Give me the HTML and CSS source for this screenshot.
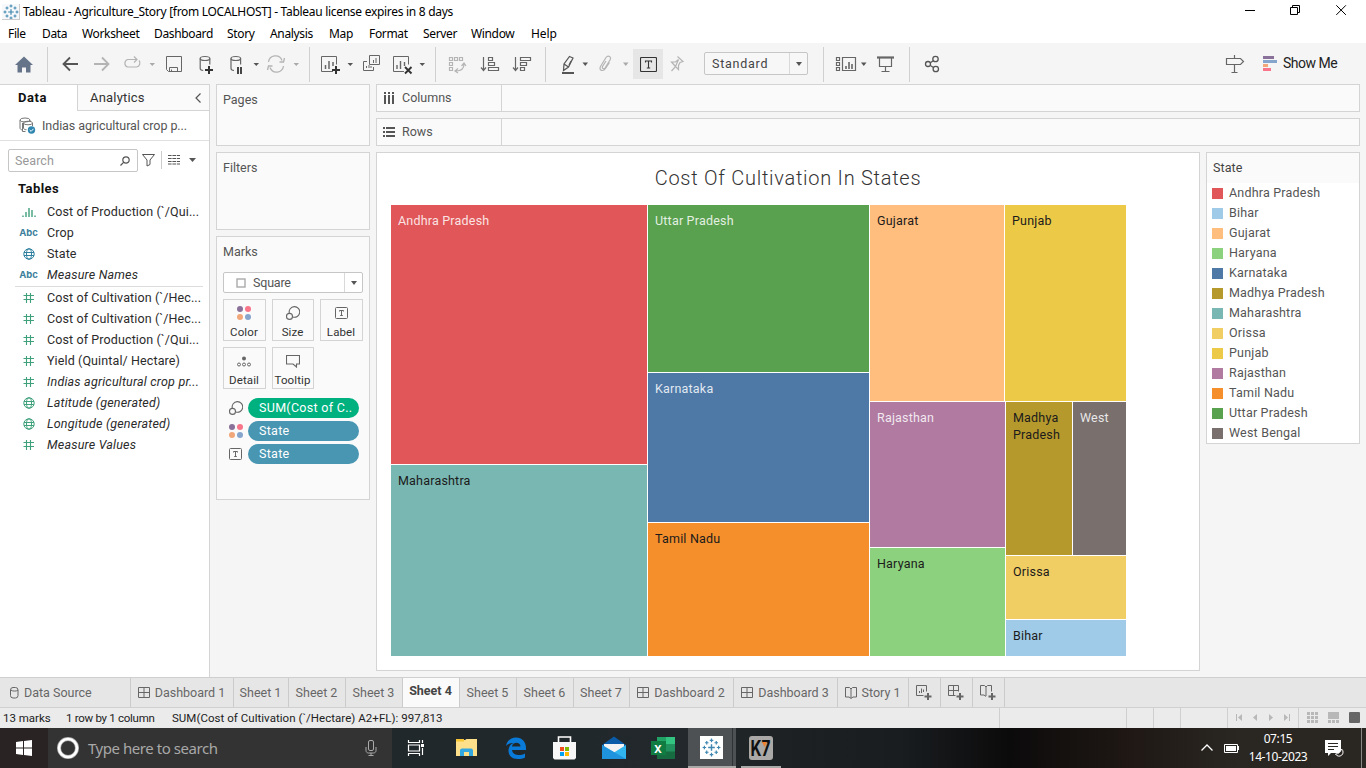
FILE: index.html
```html
<!DOCTYPE html>
<html lang="en">
<head>
<meta charset="utf-8">
<title>Tableau - Agriculture_Story</title>
<link rel="stylesheet" href="styles.css">
</head>
<body>
<svg width="0" height="0" class="defs">
  <defs>
    <symbol id="hash" viewBox="0 0 12 12"><path d="M3.500 1v10M7.500 1v10M.5 3.500h10.500M.5 7.500h10.500" fill="none" stroke="#3fa17c" stroke-width="1.1"/></symbol>
    <symbol id="globe" viewBox="0 0 12 12"><g fill="none" stroke="currentColor"><circle cx="6" cy="6" r="5.200"/><ellipse cx="6" cy="6" rx="2.500" ry="5.200"/><path d="M1 4.500h10M1 7.500h10"/></g></symbol>
    <symbol id="dots" viewBox="0 0 14 14"><circle cx="3" cy="3" r="3" fill="#8a7199"/><circle cx="11" cy="3" r="3" fill="#f8758a"/><circle cx="3" cy="11" r="3" fill="#f2a77b"/><circle cx="11" cy="11" r="3" fill="#85a5cd"/></symbol>
    <symbol id="size" viewBox="0 0 14 14"><g fill="none" stroke="#666" stroke-width="1.1"><path d="M3.300 7.200A5.300 5.300 0 1 1 6.800 11"/><circle cx="3.500" cy="10.400" r="3"/></g></symbol>
    <symbol id="label" viewBox="0 0 13 12"><rect x=".5" y=".5" width="12" height="11" rx="1" fill="none" stroke="#666"/><path d="M4.500 4.500V3.500h4v1M6.500 3.500v5M5.200 8.500h2.600" fill="none" stroke="#666"/></symbol>
    <symbol id="dash" viewBox="0 0 12 12"><path d="M.5.5h11v10H.5zM6 .5v10M.5 5.500h11" fill="none" stroke="#666"/></symbol>
    <symbol id="flake" viewBox="0 0 16 16"><g fill="none" stroke="#3e87b0"><path stroke-width="1.2" d="M8 5.2v5.600M5.200 8h5.600"/><path d="M8 .5v3M6.500 2h3M8 12.500v3M6.500 14h3M.5 8h3M2 6.500v3M12.500 8h3M14 6.500v3M4 2.500v3M2.500 4h3M12 2.500v3M10.500 4h3M4 10.500v3M2.500 12h3M12 10.500v3M10.500 12h3"/></g></symbol>
  </defs>
</svg>

<header class="titlebar">
  <svg class="app-ico" width="18" height="16" viewBox="0 0 18 16"><rect width="18" height="16" fill="#f6f8fa"/><use href="#flake" x="1" y="0" width="16" height="16"/><path d="M17.500 0v16M0 15.500h18" stroke="#ccc"/></svg>
  <span class="title-text">Tableau - Agriculture_Story [from LOCALHOST] - Tableau license expires in 8 days</span>
  <svg class="win-ctl" width="126" height="22" viewBox="1240 0 126 22" fill="none" stroke="#000"><path d="M1245 10.500h10M1290.500 7.500h7v7h-7zM1292.500 7.500v-2h7v7h-2M1336.300 5.300l9.600 9.600M1345.900 5.300l-9.600 9.600"/></svg>
</header>
<nav class="menubar">
  <span class="m1">File</span><span class="m2">Data</span><span class="m3">Worksheet</span><span class="m4">Dashboard</span><span class="m5">Story</span><span class="m6">Analysis</span><span class="m7">Map</span><span class="m8">Format</span><span class="m9">Server</span><span class="m10">Window</span><span class="m11">Help</span>
</nav>

<div class="toolbar">
  <svg width="48" height="40" viewBox="0 44 48 40"><path d="M24 56.500l9 8.500h-2.500v7.500h-4.500v-5h-4v5h-4.500V65H15z" fill="#66748a"/><path d="M47.500 47v35" stroke="#d0d0d0"/></svg>
  <svg width="70" height="40" viewBox="48 44 70 40" fill="none" stroke-width="1.8"><path d="M78 64H63.500M70 57.500L63.500 64l6.500 6.500" stroke="#555"/><path d="M94 64h14.500M102 57.500l6.500 6.500-6.500 6.500" stroke="#b4b4b4"/></svg>
  <svg width="42" height="40" viewBox="118 44 42 40" fill="none" stroke="#b4b4b4" stroke-width="1.200"><path d="M129 59.500h-1.500a4 4 0 0 0 0 7.500h9a4 4 0 0 0 2.500-6.500M129 59.500h7.500M134 56.500l3 3-3 3"/><path d="M149.500 63h5.500l-2.700 3z" fill="#aaa" stroke="none"/></svg>
  <svg width="28" height="40" viewBox="160 44 28 40" fill="none" stroke="#666"><path d="M166.500 56.500h15v15h-13l-2-2zM169.500 71v-3.500h8V71M171.500 71v-1.500"/></svg>
  <svg width="34" height="40" viewBox="188 44 34 40" fill="none" stroke="#666" stroke-width="1.200"><ellipse cx="205" cy="58.500" rx="4.800" ry="2"/><path d="M200.200 58.500v10c0 1.200 1.500 1.800 3 2M209.800 58.500v6"/><path d="M209 66v8M205 70h8" stroke="#333" stroke-width="2"/></svg>
  <svg width="42" height="40" viewBox="222 44 42 40" fill="none" stroke="#666" stroke-width="1.200"><ellipse cx="235.800" cy="58.500" rx="4.800" ry="2"/><path d="M231 58.500v10c0 1.200 1.500 1.800 3 2M240.600 58.500v6"/><path d="M238 67v7M241 67v7" stroke="#333" stroke-width="1.800"/><path d="M253.500 63h5.500l-2.700 3z" fill="#555" stroke="none"/></svg>
  <svg width="46" height="40" viewBox="264 44 46 40" fill="none" stroke="#b4b4b4" stroke-width="1.300"><path d="M268.500 62a7 7 0 0 1 13.500-1.500M283.500 66a7 7 0 0 1-13.500 1.500M279.500 62h4l1-4M272.500 66h-4l-1 4"/><path d="M293.500 63h5.500l-2.700 3z" fill="#aaa" stroke="none"/><path d="M309.500 47v35" stroke="#d0d0d0" stroke-width="1"/></svg>
  <svg width="48" height="40" viewBox="310 44 48 40" fill="none" stroke="#666"><path d="M333 71.500h-11.500v-15h15v8"/><path d="M325.500 69v-4M329 69v-8M333 66v-4" stroke-width="1.500"/><path d="M336 66v8M332 70h8" stroke="#333" stroke-width="2"/><path d="M347.500 63h5.500l-2.700 3z" fill="#555" stroke="none"/></svg>
  <svg width="30" height="40" viewBox="358 44 30 40" fill="none" stroke="#666"><path d="M369.500 55.500h10v9h-10zM367 61.500h-3.500v9h10V67M373.500 63v-3M376 63v-5M366.500 68v-2M369 68v-3M371 68v-2"/></svg>
  <svg width="48" height="40" viewBox="388 44 48 40" fill="none" stroke="#666"><path d="M404 71.500h-10.500v-15h15v8"/><path d="M397 69v-4M400.500 69v-8M404.500 66v-4" stroke-width="1.400"/><path d="M405 67l6.500 6.500M411.500 67l-6.500 6.500" stroke="#333" stroke-width="1.900"/><path d="M419.500 63h5.500l-2.700 3z" fill="#555" stroke="none"/><path d="M435.500 47v35" stroke="#d0d0d0"/></svg>
  <svg width="38" height="40" viewBox="436 44 38 40" fill="none" stroke="#b4b4b4" stroke-width="1.200"><path d="M449.500 57.500h3v3h-3zM454.500 57.500h3v3h-3zM459.500 57.500h3v3h-3zM449.500 62.500h3v3h-3zM449.500 67.500h3v3h-3zM464 64c0 5-3 7-8 7M461.500 66l2.500-3 2 3M458 68.500l-3 2.500 3 2"/></svg>
  <svg width="32" height="40" viewBox="474 44 32 40" fill="none" stroke="#666" stroke-width="1.200"><path d="M483.500 57v13M481 67.500l2.500 3 2.500-3M488.500 57.500h4v3h-4zM488.500 62.500h6v3h-6zM488.500 67.500h10v3h-10z"/></svg>
  <svg width="40" height="40" viewBox="506 44 40 40" fill="none" stroke="#666" stroke-width="1.200"><path d="M515.500 57v13M513 67.500l2.500 3 2.500-3M520.500 57.500h10v3h-10zM520.500 62.500h6v3h-6zM520.500 67.500h4v3h-4z"/><path d="M545.500 47v35" stroke="#d0d0d0" stroke-width="1"/></svg>
  <svg width="48" height="40" viewBox="546 44 48 40" fill="none" stroke="#555" stroke-width="1.200"><path d="M569.500 56.500l3.500 1.500-4.500 9-5 3.500.5-6.500zM564 64l4.500 3M571 61l-2 4"/><path d="M562 73h12" stroke-width="2"/><path d="M582.500 62.500h5.500l-2.700 3.500z" fill="#555" stroke="none"/></svg>
  <svg width="39" height="40" viewBox="594 44 39 40" fill="none" stroke="#b4b4b4" stroke-width="1.200"><path d="M606 61l-3.500 5.500c-1 2 1.500 3 2.500 1.500l5-8c2-3.500-2-5-4-2.500l-5.500 9c-2 4 2.500 5.500 5 2l4-6"/><path d="M623 62.500h5.500l-2.700 3.500z" fill="#aaa" stroke="none"/></svg>
  <span class="t-btn"><svg width="17" height="15" viewBox="0 0 17 15" fill="none" stroke="#333" stroke-width="1.100"><rect x=".5" y=".5" width="16" height="14" rx="1"/><path d="M5.500 5.500v-1.500h6v1.500M8.500 4v7M6.800 11h3.400"/></svg></span>
  <svg width="41" height="40" viewBox="663 44 41 40" fill="none" stroke="#b4b4b4" stroke-width="1.200"><path d="M677.500 56.500l5.500 5-3 1-1.500 3v4l-3-3-4 4.500M675.500 66.500l-4-4.500h4l3-2.500z"/></svg>
  <div class="combo"><span>Standard</span><i></i></div>
  <svg width="102" height="40" viewBox="808 44 102 40" fill="none" stroke="#666" stroke-width="1.200"><path d="M823.500 47v35M909.500 47v35" stroke="#d0d0d0" stroke-width="1"/><path d="M836.500 57.500h3v3h-3zM836.500 62.500h3v3h-3zM836.500 67.500h3v3h-3zM842.500 57.500h13v13h-13z"/><path d="M846 69v-3M849 69v-7M852 69v-5" stroke-width="1.600"/><path d="M861 62.500h5.500l-2.700 3.500z" fill="#555" stroke="none"/><path d="M879.500 58v8.500h12V58M885.500 66v5M881.500 71.500h8"/><path d="M877 57.500h17" stroke-width="2.200"/></svg>
  <svg width="40" height="40" viewBox="910 44 40 40" fill="none" stroke="#555" stroke-width="1.300"><circle cx="928" cy="64" r="2.500"/><circle cx="935.500" cy="59" r="2.700"/><circle cx="935.800" cy="69" r="2.700"/><path d="M930.300 62.700l3-2M930.300 65.500l3.200 2"/></svg>
  <svg class="push" width="120" height="40" viewBox="1162 44 120 40"><path d="M1226.500 58.500h14l3 3-3 3h-14zM1234.500 55v3M1234.500 65v7.500M1231.500 72.500h6" fill="none" stroke="#666" stroke-width="1.200"/><path d="M1263 56h11v3h-11z" fill="#8a7199"/><path d="M1263 60h14v3h-14z" fill="#85a5cd"/><path d="M1263 64h5v3h-5z" fill="#f2a77b"/><path d="M1263 68h8v3h-8z" fill="#f8758a"/></svg>
  <span class="showme">Show Me</span>
</div>

<main class="workspace">
  <aside class="datapane">
    <div class="ptabs">
      <b class="ptab-on">Data</b>
      <div class="ptab-off"><span>Analytics</span><svg width="6" height="10" viewBox="0 0 6 10"><path d="M5.500.5L1 5l4.500 4.500" fill="none" stroke="#555" stroke-width="1.200"/></svg></div>
    </div>
    <div class="source">
      <svg width="17" height="17" viewBox="0 0 17 17" fill="none" stroke="#777"><ellipse cx="6" cy="3" rx="5" ry="2"/><path d="M1 3v8c0 1 1 2 3 2M3.500 6v8.500h3M11 3v1"/><ellipse cx="9" cy="6" rx="4.500" ry="1.800"/><path d="M4.500 6v5c0 1 1 1.700 3 1.700M13.500 6v3"/><circle cx="12.500" cy="13" r="3.700" fill="#2f86b0" stroke="none"/><path d="M10.700 13l1.400 1.400 2.400-2.600" stroke="#fff"/></svg>
      <span>Indias agricultural crop p...</span>
    </div>
    <div class="searchrow">
      <div class="search"><span>Search</span><svg width="10" height="10" viewBox="0 0 10 10" fill="none" stroke="#555" stroke-width="1.200"><circle cx="6" cy="4" r="3.200"/><path d="M3.800 6.200L.5 9.500"/></svg></div>
      <svg width="65" height="22" viewBox="138 149 65 22" fill="none" stroke="#555"><path d="M142.500 154.500h12l-4.500 5.500v4.500l-3 1.500v-6z"/><path d="M161.500 151v18" stroke="#ccc"/><path d="M168 155.500h12M168 158.500h12M168 161.500h12M168 164h12" stroke-width="1.200" stroke-dasharray="3.600 .8"/><path d="M189 158h7l-3.500 4z" fill="#555" stroke="none"/></svg>
    </div>
    <h2 class="tables">Tables</h2>
    <ul class="fields">
      <li><svg width="14" height="12" viewBox="0 0 14 12" stroke="#3fa17c" stroke-width="1.400"><path d="M1 11V9.500M4 11V6M7 11V2M10 11V4M13 11V9.500"/></svg><span>Cost of Production (`/Qui...</span></li>
      <li><b class="abc">Abc</b><span>Crop</span></li>
      <li><svg class="blue" width="12" height="12"><use href="#globe"/></svg><span>State</span></li>
      <li><b class="abc">Abc</b><span class="it">Measure Names</span></li>
    </ul>
    <ul class="fields measures">
      <li><svg width="12" height="12"><use href="#hash"/></svg><span>Cost of Cultivation (`/Hec...</span></li>
      <li><svg width="12" height="12"><use href="#hash"/></svg><span>Cost of Cultivation (`/Hec...</span></li>
      <li><svg width="12" height="12"><use href="#hash"/></svg><span>Cost of Production (`/Qui...</span></li>
      <li><svg width="12" height="12"><use href="#hash"/></svg><span>Yield (Quintal/ Hectare)</span></li>
      <li><svg width="12" height="12"><use href="#hash"/></svg><span class="it">Indias agricultural crop pr...</span></li>
      <li><svg class="green" width="12" height="12"><use href="#globe"/></svg><span class="it">Latitude (generated)</span></li>
      <li><svg class="green" width="12" height="12"><use href="#globe"/></svg><span class="it">Longitude (generated)</span></li>
      <li><svg width="12" height="12"><use href="#hash"/></svg><span class="it">Measure Values</span></li>
    </ul>
  </aside>

  <section class="cards">
    <div class="card pages">Pages</div>
    <div class="card filters">Filters</div>
    <div class="card marks">
      <div class="card-h">Marks</div>
      <div class="marktype"><svg width="10" height="10"><rect x="1" y="1" width="8" height="8" fill="#fff" stroke="#aaa" stroke-width="1.400"/></svg><span>Square</span><i></i></div>
      <div class="mbtns">
        <div class="mbtn"><svg width="14" height="14"><use href="#dots"/></svg>Color</div>
        <div class="mbtn"><svg width="14" height="14"><use href="#size"/></svg>Size</div>
        <div class="mbtn"><svg width="13" height="14"><use href="#label"/></svg>Label</div>
        <div class="mbtn"><svg width="14" height="14" viewBox="0 0 14 14"><circle cx="7" cy="4.500" r="2" fill="#666"/><g fill="none" stroke="#666"><circle cx="2" cy="10.500" r="1.500"/><circle cx="7" cy="10.500" r="1.500"/><circle cx="12" cy="10.500" r="1.500"/></g></svg>Detail</div>
        <div class="mbtn"><svg width="14" height="14" viewBox="0 0 14 14"><path d="M.5 1.500h13v8.500h-3v3L7 10H.5z" fill="none" stroke="#666" stroke-width="1.100"/></svg>Tooltip</div>
      </div>
      <div class="pills">
        <div class="prow"><svg width="14" height="14"><use href="#size"/></svg><span class="pill sum">SUM(Cost of C..</span></div>
        <div class="prow"><svg width="14" height="14"><use href="#dots"/></svg><span class="pill">State</span></div>
        <div class="prow"><svg width="14" height="12"><use href="#label" width="13" height="12"/></svg><span class="pill">State</span></div>
      </div>
    </div>
  </section>

  <section class="right">
    <div class="shelf"><div class="shelf-l"><svg width="12" height="12" fill="none" stroke="#555" stroke-width="2"><path d="M2 0v2M6 0v2M10 0v2M2 3v9M6 3v9M10 3v9"/></svg>Columns</div></div>
    <div class="shelf"><div class="shelf-l"><svg width="12" height="12" fill="none" stroke="#555" stroke-width="2"><path d="M0 2h2M0 6h2M0 10h2M3 2h9M3 6h9M3 10h9"/></svg>Rows</div></div>
    <div class="viewrow">
      <div class="view">
        <h1>Cost Of Cultivation In States</h1>
        <div class="tree">
          <div class="tc c1"><div class="cell lt ap">Andhra Pradesh</div><div class="cell mh">Maharashtra</div></div>
          <div class="tc c2"><div class="cell lt up">Uttar Pradesh</div><div class="cell lt ka">Karnataka</div><div class="cell tn">Tamil Nadu</div></div>
          <div class="tc c3">
            <div class="tr top"><div class="cell gj">Gujarat</div><div class="cell pb">Punjab</div></div>
            <div class="tr bot">
              <div class="tc c4"><div class="cell lt rj">Rajasthan</div><div class="cell hr">Haryana</div></div>
              <div class="tc c5">
                <div class="tr mw"><div class="cell mp">Madhya Pradesh</div><div class="cell lt wb">West</div></div>
                <div class="cell or">Orissa</div><div class="cell bh">Bihar</div>
              </div>
            </div>
          </div>
        </div>
      </div>
      <div class="legend">
        <div class="lg-h">State</div>
        <ul>
          <li><i class="ap"></i>Andhra Pradesh</li><li><i class="bh"></i>Bihar</li><li><i class="gj"></i>Gujarat</li><li><i class="hr"></i>Haryana</li><li><i class="ka"></i>Karnataka</li><li><i class="mp"></i>Madhya Pradesh</li><li><i class="mh"></i>Maharashtra</li><li><i class="or"></i>Orissa</li><li><i class="pb"></i>Punjab</li><li><i class="rj"></i>Rajasthan</li><li><i class="tn"></i>Tamil Nadu</li><li><i class="up"></i>Uttar Pradesh</li><li><i class="wb"></i>West Bengal</li>
        </ul>
      </div>
    </div>
  </section>
</main>

<div class="tabs">
  <div class="tab ds"><svg width="10" height="12" fill="none" stroke="#666"><rect x="1.500" y=".5" width="7.500" height="10.500" rx="2.500"/><path d="M2 3.200c2 1.200 5 1.200 7 0"/></svg>Data Source</div>
  <div class="tab w103"><svg width="12" height="12"><use href="#dash"/></svg>Dashboard 1</div>
  <div class="tab w55">Sheet 1</div>
  <div class="tab w57">Sheet 2</div>
  <div class="tab w57">Sheet 3</div>
  <div class="tab w57 on">Sheet 4</div>
  <div class="tab w57">Sheet 5</div>
  <div class="tab w57">Sheet 6</div>
  <div class="tab w56">Sheet 7</div>
  <div class="tab w104"><svg width="12" height="12"><use href="#dash"/></svg>Dashboard 2</div>
  <div class="tab w104"><svg width="12" height="12"><use href="#dash"/></svg>Dashboard 3</div>
  <div class="tab w71"><svg width="12" height="12" fill="none" stroke="#666"><path d="M6 2L4.500.5h-4v9.500H4L6 11.500 8 10h3.500V.5h-4zM6 2v9"/></svg>Story 1</div>
  <div class="tab w32"><svg width="16" height="15" fill="none" stroke="#666"><path d="M7.500 10.500h-7V.5h10v6M3.500 8V6M5.500 8V3.500M7.500 7V4.500"/><path d="M12 8v7M8.500 11.500h7" stroke-width="2"/></svg></div>
  <div class="tab w32"><svg width="16" height="15" fill="none" stroke="#666"><path d="M7.500 10.500h-7V.5h10v6M5.500.5v10M.5 5.500h10"/><path d="M12 8v7M8.500 11.500h7" stroke-width="2"/></svg></div>
  <div class="tab w32"><svg width="16" height="15" fill="none" stroke="#666"><path d="M6 2L4.500.5h-4v9.500H4L6 11.500M6 2L7.500.5h4v6M6 2v9"/><path d="M12 8v7M8.500 11.500h7" stroke-width="2"/></svg></div>
</div>

<div class="status">
  <span class="s1">13 marks</span><span class="s2">1 row by 1 column</span><span class="s3">SUM(Cost of Cultivation (`/Hectare) A2+FL): 997,813</span>
  <svg class="push" width="367" height="20" viewBox="999 708 367 20"><path d="M999.500 708v20M1126.500 708v20M1153.500 708v20M1180.500 708v20M1227.500 708v20M1298.500 708v20" stroke="#cfcfcf"/><g fill="#b8b8b8"><path d="M1236 714h1v7h-1zM1242 714v7l-4-3.500zM1257 714v7l-4-3.500zM1269 714v7l4-3.500zM1284 714v7l4-3.500zM1289 714h1v7h-1z"/><path d="M1307 712h3v3h-3zM1311 712h3v3h-3zM1315 712h3v3h-3zM1307 716h3v3h-3zM1311 716h3v3h-3zM1315 716h3v3h-3zM1307 720h3v3h-3zM1311 720h3v3h-3zM1315 720h3v3h-3zM1328 712h11v7h-11zM1328 720h3v3h-3zM1332 720h3v3h-3zM1336 720h3v3h-3z"/></g><rect x="1349" y="712" width="11" height="11" rx="1" fill="#666"/></svg>
</div>

<footer class="taskbar">
  <svg class="start" width="48" height="40" viewBox="0 728 48 40"><path d="M16 742l7-1v6.500h-7zM24 741l8-1v7.500h-8zM16 748.500h7v6.500l-7-1zM24 748.500h8v7.500l-8-1z" fill="#fff"/></svg>
  <div class="wsearch">
    <svg width="22" height="22"><circle cx="11" cy="11" r="9" fill="none" stroke="#aaa" stroke-width="4"/><circle cx="11" cy="11" r="9" fill="none" stroke="#fff" stroke-width="2.600"/></svg>
    <span>Type here to search</span>
    <svg width="12" height="16" viewBox="0 0 12 16" fill="none" stroke="#aaa"><rect x="3.500" y=".5" width="5" height="10" rx="1.500"/><path d="M1 7v3.500c0 1.500 1 2.500 2.500 2.500h5c1.500 0 2.500-1 2.500-2.500V7M6 13v2.500M3.500 15.500h5"/></svg>
  </div>
  <svg width="48" height="40" viewBox="392 728 48 40" fill="none" stroke="#fff" stroke-width="1.200"><path d="M408.500 740v2.500h11V740M408.500 745h11v6h-11zM408.500 756v-2.500h11v2.500M422.500 740v3M422.500 748v7"/><path d="M421 744h3v3h-3z" fill="#fff" stroke="none"/></svg>
  <svg width="52" height="40" viewBox="440 728 52 40"><path d="M456 740h9l1.500-1H477v17h-21z" fill="#ffe08a"/><path d="M456 739h8v2.500h-8z" fill="#f7c634"/><path d="M460 756v-5.500q0-2 2-2h9q2 0 2 2v5.500h-4v-4h-5v4z" fill="#33a7e0"/></svg>
  <svg width="48" height="40" viewBox="492 728 48 40"><path d="M506 746c1-5.500 5-8.500 10-8.500 6 0 10 4.500 10 10.500v2h-14c.5 4 4 5 7 5 2.200 0 4-.5 6-1.500v4c-2 1.200-4.500 1.500-7 1.500-6 0-9.500-3.500-9.500-8.500 0-3.500 2-6.500 5-7.500-3 0-6 1-7.500 3zM512 746.500h8.500c0-5-8-5-8.500 0z" fill="#0a7ad8"/></svg>
  <svg width="50" height="40" viewBox="540 728 50 40"><path d="M558.500 744v-7h12v7" fill="none" stroke="#fff" stroke-width="1.600"/><path d="M553 742h23v16l-1.500 1.500h-20L553 758z" fill="#f7f7f7"/><path d="M560 747h4v4h-4z" fill="#f04e1f"/><path d="M565 747h4v4h-4z" fill="#7fba00"/><path d="M560 752h4v4h-4z" fill="#00a1f1"/><path d="M565 752h4v4h-4z" fill="#ffb900"/></svg>
  <svg width="49" height="40" viewBox="590 728 49 40"><path d="M602 745l12-8.500 12 8.500v14h-24z" fill="#0b5ca8"/><path d="M604 744h20v8l-10 4-10-6z" fill="#f3f3f3"/><path d="M626 745v14h-24v-14l12 7.500z" fill="#31b5ee"/><path d="M602 745v14h24z" fill="#1f93de"/></svg>
  <svg width="49" height="40" viewBox="639 728 49 40"><path d="M657 737h18v22h-18z" fill="#176b40"/><path d="M657 737h9v7.500h-9z" fill="#21a366"/><path d="M666 737h9v7.500h-9z" fill="#33c481"/><path d="M666 744.500h9v7h-9z" fill="#21925d"/><path d="M651 741h15v14h-15z" fill="#107c41"/><text class="xl" x="658" y="752.500" text-anchor="middle">X</text></svg>
  <svg width="48" height="40" viewBox="688 728 48 40"><rect x="688" y="728" width="48" height="40" fill="#4e5153"/><path d="M732.500 728v40" stroke="#303335"/><path d="M688 766h48v2h-48z" fill="#a9aaa8"/><rect x="700" y="736" width="23" height="23" fill="#fff"/><use href="#flake" x="702" y="738" width="19" height="19"/></svg>
  <svg width="50" height="40" viewBox="736 728 50 40"><path d="M741 766h40v2h-40z" fill="#a9aaa8"/><rect x="749" y="736" width="24" height="24" rx="3" fill="#aaa9a7"/><text class="k7" x="750.500" y="756" textLength="20" lengthAdjust="spacingAndGlyphs">K7</text><path d="M762 742h5l-2.500 5z" fill="#f08030"/></svg>
  <div class="tray">
    <svg width="50" height="40" viewBox="1196 728 50 40" fill="none" stroke="#fff"><path d="M1201.500 750.500l5.500-5.500 5.500 5.500" stroke-width="1.300"/><path d="M1224.500 744.500h13v8h-13z"/><path d="M1226 746h10v5h-10zM1238 746h1v4h-1z" fill="#fff" stroke="none"/></svg>
    <div class="clock"><span class="ck1">07:15</span><span class="ck2">14-10-2023</span></div>
    <svg width="54" height="40" viewBox="1312 728 54 40"><path d="M1325 740h16v13h-10l-3 3v-3h-3z" fill="#fff"/><path d="M1328 743.500h10M1328 746.500h10M1328 749.500h6" stroke="#2b2723"/><path d="M1341.500 749a4 4 0 1 1-6 5c3 0 5-2 6-5z" fill="#2b2723" stroke="#fff"/><path d="M1361.500 728v40" stroke="#888"/></svg>
  </div>
</footer>
</body>
</html>
```
FILE: styles.css
```css
* { box-sizing: border-box; }
body {
  margin: 0; width: 1366px; height: 768px; overflow: hidden;
  display: flex; flex-direction: column; background: #fff;
  font: 12.5px/16px Roboto, sans-serif; color: #333;
}
svg { display: block; flex: none; }
.defs { position: absolute; }
ul, h1, h2 { margin: 0; padding: 0; list-style: none; font-weight: normal; }
.push { margin-left: auto; }
span, div { white-space: nowrap; }

.titlebar { height: 22px; display: flex; align-items: center; padding-left: 2px; flex: none;
  font: 12px/16px "Noto Sans", sans-serif; color: #000; }
.title-text { margin-left: 3px; letter-spacing: -0.29px; padding-top: 2px; }
.app-ico { margin-top: 1px; }
.win-ctl { margin-left: auto; }

.menubar { height: 21px; display: flex; align-items: center; padding-left: 8px; flex: none;
  font: 12px/16px "Noto Sans", sans-serif; letter-spacing: -0.35px; color: #000; padding-top: 2px; }
.m1 { width: 34px; } .m2 { width: 40px; } .m3 { width: 72px; } .m4 { width: 73px; } .m5 { width: 43px; }
.m6 { width: 59px; } .m7 { width: 40px; } .m8 { width: 54px; } .m9 { width: 48px; } .m10 { width: 60px; }
.m11 { letter-spacing: -.1px; }

.toolbar { height: 41px; flex: none; background: #f5f5f5; display: flex; align-items: flex-start; padding-top: 1px; }
.t-btn { width: 30px; height: 30px; margin-top: 5px; background: #e6e6e6; display: flex; align-items: center; justify-content: center; }
.combo { width: 104px; height: 23px; margin-top: 8px; border: 1px solid #c6c6c6; border-radius: 2px; background: #f7f7f7; display: flex; align-items: center; color: #444; }
.combo span { flex: 1; padding-left: 7px; letter-spacing: .75px; }
.combo i, .marktype i { width: 18px; height: 100%; border-left: 1px solid #d9d9d9; display: flex; align-items: center; justify-content: center; }
.combo i::after, .marktype i::after { content: ""; border: 3.5px solid transparent; border-top: 4px solid #555; border-bottom: 0; }
.showme { width: 84px; line-height: 38px; padding-left: 1px; font-size: 14px; letter-spacing: -.5px; color: #222; }

.workspace { height: 593px; flex: none; display: flex; background: #f5f5f5; }
.datapane { width: 210px; background: #fff; border-right: 1px solid #d4d4d4; border-top: 1px solid #d4d4d4; }
.ptabs { display: flex; height: 26px; line-height: 26px; color: #111; font-size: 13px; }
.ptab-on { width: 77px; padding-left: 18px; letter-spacing: .6px; }
.ptab-off { flex: 1; display: flex; align-items: center; justify-content: space-between; padding: 0 8px 0 12px;
  background: #fafafa; border: solid #d4d4d4; border-width: 0 0 1px 1px; letter-spacing: .2px; color: #333; }
.source { height: 30px; border-bottom: 1px solid #e0e0e0; display: flex; align-items: center; padding-left: 19px; gap: 6px; color: #555; letter-spacing: -.07px; }
.searchrow { display: flex; padding: 8px 0 0 8px; height: 37px; }
.search { width: 130px; height: 23px; border: 1px solid #c6c6c6; border-radius: 2px; display: flex; align-items: center; justify-content: space-between; padding: 0 7px 0 6px; color: #999; letter-spacing: .1px; }
.tables { padding: 3px 0 0 18px; font: bold 13px/16px Roboto, sans-serif; letter-spacing: .45px; height: 23px; color: #111; }
.fields li { height: 21px; display: grid; grid-template-columns: 23px 1fr; align-items: center; column-gap: 7px; justify-items: start; }
.fields { padding-left: 17px; color: #2b2b2b; }
.fields svg { justify-self: center; }
.fields span { letter-spacing: .11px; }
.measures { margin-left: 15px; padding-left: 2px; width: 188px; border-top: 1px solid #dcdcdc; margin-top: 1px; }
.fields .it { font-style: italic; letter-spacing: .2px; }
.abc { font: bold 9.5px/12px Inter, sans-serif; color: #3e7f9c; justify-self: center; }
.blue { color: #2f7f9f; } .green { color: #3fa17c; }

.cards { width: 154px; margin-left: 6px; display: flex; flex-direction: column; gap: 6px; }
.card { background: #fafafa; border: 1px solid #d4d4d4; padding: 7px 6px; color: #555; }
.pages { height: 62px; } .filters { height: 78px; } .marks { height: 264px; }
.card-h { height: 28px; }
.marktype { height: 21px; border: 1px solid #c6c6c6; border-radius: 2px; background: #fff; display: flex; align-items: center; padding-left: 12px; width: 140px; }
.marktype span { flex: 1; padding-left: 7px; letter-spacing: -.2px; }
.mbtns { display: grid; grid-template-columns: 43px 42px 43px; gap: 6px; padding-top: 6px; }
.mbtn { height: 42px; border: 1px solid #d4d4d4; background: #fafafa; display: flex; flex-direction: column; align-items: center; gap: 4px; padding: 6px 1px 0 0; font-size: 11.5px; letter-spacing: .1px; line-height: 16px; color: #333; }
.pills { padding: 9px 0 0 6px; display: flex; flex-direction: column; gap: 3px; }
.prow { display: flex; align-items: center; gap: 5px; }
.pill { width: 111px; height: 20px; border-radius: 10px; background: #4996b2; color: #fff; padding-left: 11px; line-height: 20px; letter-spacing: .3px; }
.sum { background: #00b180; }

.right { width: 984px; margin-left: 6px; display: flex; flex-direction: column; gap: 6px; }
.shelf { height: 28px; background: #fafafa; border: 1px solid #d4d4d4; color: #555; }
.shelf-l { width: 125px; height: 26px; border-right: 1px solid #d4d4d4; display: flex; align-items: center; padding-left: 6px; gap: 7px; }
.viewrow { display: flex; gap: 6px; align-items: flex-start; }
.view { width: 824px; height: 519px; background: #fff; border: 1px solid #d4d4d4; padding-left: 14px; }
h1 { height: 52px; padding-top: 13px; width: 794px; text-align: center; font: 300 20px/24px Roboto, sans-serif; letter-spacing: .73px; color: #333; }
.tree { width: 735px; height: 451px; display: flex; gap: 1px; }
.tc { display: flex; flex-direction: column; gap: 1px; }
.tr { display: flex; gap: 1px; }
.cell { padding: 7px 0 0 7px; line-height: 17px; letter-spacing: .2px; color: #1b1b1b; flex: 1; }
.lt { color: rgba(255,255,255,.85); }
.c1 { width: 256px; } .c2 { width: 221px; } .c3 { width: 256px; }
.c1 .ap { flex: none; height: 259px; }
.c2 .up { flex: none; height: 167px; } .c2 .ka { flex: none; height: 149px; }
.top { height: 196px; } .bot { height: 254px; }
.top .gj { flex: none; width: 134px; }
.c4 { width: 135px; } .c5 { width: 120px; }
.c4 .rj { flex: none; height: 145px; }
.mw { height: 153px; } .mw .mp { flex: none; width: 66px; white-space: normal; }
.c5 > .or { flex: none; height: 63px; }
.ap { background: #e15759; } .bh { background: #a0cbe8; } .gj { background: #ffbe7d; } .hr { background: #8cd17d; }
.ka { background: #4e79a7; } .mp { background: #b6992d; } .mh { background: #79b7b2; } .or { background: #f1ce63; }
.pb { background: #edc948; } .rj { background: #b07aa1; } .tn { background: #f58f2c; } .up { background: #59a14f; } .wb { background: #79706e; }

.legend { width: 154px; height: 292px; border: 1px solid #d4d4d4; background: #fff; }
.lg-h { height: 30px; background: #fafafa; padding: 7px 6px; color: #444; letter-spacing: .1px; }
.legend li { height: 20px; display: flex; align-items: center; padding-left: 5px; gap: 6px; letter-spacing: .2px; color: #555; }
.legend i { width: 11px; height: 11px; }

.tabs { height: 31px; flex: none; display: flex; background: #e6e6e6; border-top: 1px solid #cfcfcf; border-bottom: 1px solid #d0d0d0; color: #666; }
.tab { border-right: 1px solid #cbcbcb; display: flex; align-items: center; justify-content: center; gap: 5px; padding-right: 1px; }
.ds { width: 131px; justify-content: flex-start; padding-left: 9px; }
.w103 { width: 103px; } .w55 { width: 55px; } .w57 { width: 57px; } .w56 { width: 56px; } .w104 { width: 104px; } .w71 { width: 71px; } .w32 { width: 32px; }
.on { background: #fafafa; font-weight: bold; color: #444; padding-bottom: 3px; }

.status { height: 20px; flex: none; background: #ebebeb; display: flex; align-items: center; font-size: 11.5px; color: #222; padding-left: 3px; }
.s1 { width: 63px; } .s2 { width: 106px; letter-spacing: -.28px; }
.s3 { letter-spacing: .04px; }

.taskbar { height: 40px; flex: none; display: flex; background: linear-gradient(90deg, #20282c 392px, #22282b 700px, #1c2022 800px, #191d20 900px, #0c0b0b 1010px, #1f1814 1130px, #2a2723 1240px, #2a2621 1366px); font-family: "Noto Sans", sans-serif; }
.start { background: #292423; }
.wsearch { width: 344px; background: #333; display: flex; align-items: center; padding: 0 15px 0 9px; color: #a8a8a8; font-size: 15px; }
.wsearch span { flex: 1; padding-left: 9px; letter-spacing: -.45px; }
.xl { font: bold 11px "Noto Sans", sans-serif; fill: #fff; }
.k7 { font: bold 21px Inter, sans-serif; fill: #111; }
.tray { margin-left: auto; display: flex; color: #fff; font-size: 12px; }
.clock { width: 66px; display: flex; flex-direction: column; align-items: center; line-height: 18px; padding: 2px 2px 0 0; letter-spacing: -.4px; }
```
